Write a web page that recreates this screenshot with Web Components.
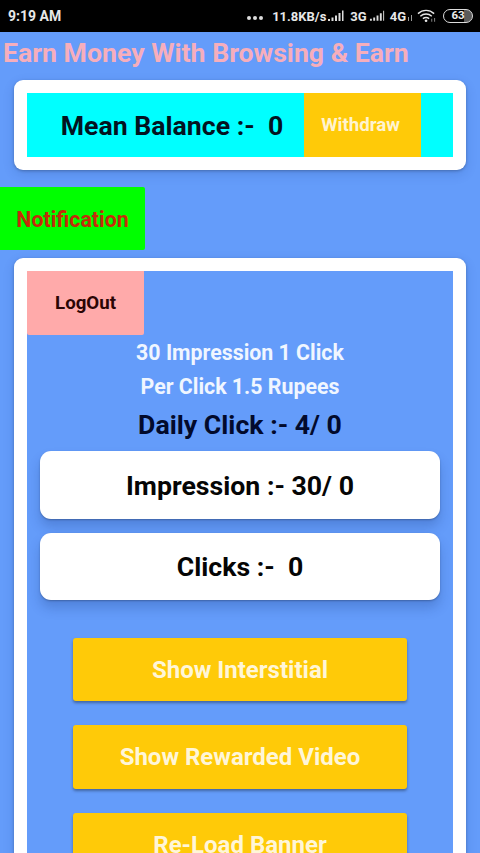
<!DOCTYPE html>
<html>
<head>
<meta charset="utf-8">
<title>Earn Money</title>
<style>
    html, body { margin: 0; height: 853px; overflow: hidden; background: #649cfa; }
    body { font-family: Roboto, "Liberation Sans", sans-serif; }
</style>
</head>
<body>
<app-screen>
    <status-bar></status-bar>
    <h-title>Earn Money With Browsing &amp; Earn</h-title>
    <white-card style="margin-top:11px">
        <balance-row></balance-row>
    </white-card>
    <flat-button kind="notify">Notification</flat-button>
    <white-card style="margin-top:8px">
        <click-panel></click-panel>
    </white-card>
</app-screen>

<script>
customElements.define('app-screen', class extends HTMLElement {
    constructor() {
        super();
        this.attachShadow({mode: 'open'}).innerHTML = `
<style>
    :host { display: flex; flex-direction: column; width: 480px; height: 853px; overflow: hidden; }
</style>
<slot></slot>`;
    }
});

customElements.define('status-bar', class extends HTMLElement {
    constructor() {
        super();
        this.attachShadow({mode: 'open'}).innerHTML = `
<style>
    :host { display: flex; flex: none; align-items: center; height: 32px; padding: 0 7px 0 8px; background: #000; color: #e8e8e8; font: 700 13px Roboto, sans-serif; }
    .time { flex: 1; font-size: 14px; }
    .right { display: flex; align-items: center; }
    .dots { display: flex; gap: 2px; margin-right: 9px; margin-top: 4px; }
    .dots i { width: 4px; height: 4px; border-radius: 50%; background: #ddd; }
    svg { display: block; flex: none; }
    .batt { box-sizing: border-box; width: 30px; height: 14px; margin-left: 6px; border: 1.5px solid #ddd; border-radius: 7px; background: linear-gradient(90deg, transparent 70%, #5a5a5a 70%); font-size: 11.5px; line-height: 11px; text-align: center; color: #eee; }
</style>
<span class="time">9:19 AM</span>
<span class="right">
    <span class="dots"><i></i><i></i><i></i></span>
    <span>11.8KB/s</span>
    <svg width="19" height="12" viewBox="0 0 17 12"><path fill="#ddd" d="M1 9h2v2H1zM4.500 7.500h2V11h-2zM8 5.500h2V11H8zM11.500 3h2v8h-2zM15 .5h1.500V11H15z"/></svg>
    <span style="margin-left:5px">3G</span>
    <svg width="17" height="12" viewBox="0 0 18 12" style="margin-left:2px"><path fill="#ddd" d="M1 9h2v2H1zM4.500 7.500h2V11h-2zM8 5.500h2V11H8zM11.500 3h2v8h-2zM15 .5h1V11h-1z"/></svg>
    <span style="margin-left:4px">4G</span>
    <svg width="6" height="8" viewBox="0 0 6 8" style="margin:4px 0 0 1px"><path fill="#999" d="M1 3h1v4H1zM4 1h1v6H4z"/></svg>
    <svg width="20" height="14" viewBox="0 0 21 14" style="margin-left:4px"><g fill="none" stroke="#e8e8e8" stroke-width="1.500"><path d="M1 4.500c5-4.500 12-4.500 17 0"/><path d="M3.500 7.200c3.500-3 8.500-3 12 0"/><path d="M6.200 9.800c2-1.600 4.600-1.600 6.600 0"/></g><circle cx="9.500" cy="12" r="1.400" fill="#e8e8e8"/><path fill="#888" d="M15 10h1v3h-1zM18 9h1v4h-1z"/></svg>
    <span class="batt">63</span>
</span>`;
    }
});

customElements.define('h-title', class extends HTMLElement {
    constructor() {
        super();
        this.attachShadow({mode: 'open'}).innerHTML = `
<style>
    :host { display: block; flex: none; height: 31px; margin-top: 6px; padding-left: 3px; color: #f6aebc; font: 700 26.670px/31px Roboto, sans-serif; white-space: nowrap; }
</style>
<slot></slot>`;
    }
});

customElements.define('white-card', class extends HTMLElement {
    constructor() {
        super();
        this.attachShadow({mode: 'open'}).innerHTML = `
<style>
    :host { display: block; flex: none; margin: 0 14px; padding: 13px; background: #fff; border-radius: 9px; box-shadow: 0 1px 3px rgba(0,0,0,.25), 0 4px 12px rgba(20,50,120,.16); }
</style>
<slot></slot>`;
    }
});

customElements.define('flat-button', class extends HTMLElement {
    constructor() {
        super();
        this.attachShadow({mode: 'open'}).innerHTML = `
<style>
    :host { display: flex; flex: none; align-items: center; justify-content: center; box-sizing: border-box; font-family: Roboto, sans-serif; font-weight: 700; }
    :host([kind=notify]) { width: 145px; height: 63px; margin-top: 17px; padding-top: 1px; background: #00ff00; color: #c62a0a; font-size: 21.330px; border-radius: 0 2px 2px 0; }
    :host([kind=withdraw]) { width: 117px; height: 64px; padding-right: 4px; background: #ffca08; color: #fff3d0; font-size: 18.670px; }
    :host([kind=logout]) { width: 117px; height: 64px; background: #ffaaaa; color: #2a0505; font-size: 18.670px; border-radius: 0 0 2px 2px; }
    :host([kind=action]) { width: 334px; height: 63.500px; margin: 0 auto 24px; padding-top: 1px; background: #ffca08; color: #fff6d8; font-size: 24px; border-radius: 3px; box-shadow: 0 2px 3px rgba(0,0,0,.35); }
</style>
<slot></slot>`;
    }
});

customElements.define('balance-row', class extends HTMLElement {
    constructor() {
        super();
        this.attachShadow({mode: 'open'}).innerHTML = `
<style>
    :host { display: flex; height: 64px; background: #00ffff; }
    .label { box-sizing: border-box; width: 277px; padding-left: 13px; text-align: center; color: #03131f; font: 700 26.670px/66px Roboto, sans-serif; white-space: pre; }
</style>
<span class="label">Mean Balance :-  0</span>
<flat-button kind="withdraw">Withdraw</flat-button>`;
    }
});

customElements.define('stat-box', class extends HTMLElement {
    constructor() {
        super();
        this.attachShadow({mode: 'open'}).innerHTML = `
<style>
    :host { display: flex; box-sizing: border-box; align-items: center; justify-content: center; height: 67.500px; margin: 0 13px 14px; padding-top: 2px; background: #fff; border-radius: 11px; box-shadow: 0 1px 2px rgba(0,0,0,.25), 0 8px 12px rgba(20,50,120,.24); color: #050505; font: 700 26.670px Roboto, sans-serif; white-space: pre; }
</style>
<slot></slot>`;
    }
});

customElements.define('click-panel', class extends HTMLElement {
    constructor() {
        super();
        this.attachShadow({mode: 'open'}).innerHTML = `
<style>
    :host { display: block; height: 600px; margin-bottom: -13px; background: #649cfa; font-family: Roboto, sans-serif; font-weight: 700; text-align: center; }
    .info { height: 34px; color: #f0f6ff; font-size: 21.330px; line-height: 34px; }
    .daily { height: 42px; margin-bottom: 5px; color: #020a2c; font-size: 26.670px; line-height: 42px; }
    .first { padding-top: 1px; }
    .gap { height: 23.500px; }
</style>
<flat-button kind="logout">LogOut</flat-button>
<div class="info first">30 Impression 1 Click</div>
<div class="info">Per Click 1.5 Rupees</div>
<div class="daily">Daily Click :- 4/ 0</div>
<stat-box>Impression :- 30/ 0</stat-box>
<stat-box>Clicks :-  0</stat-box>
<div class="gap"></div>
<flat-button kind="action">Show Interstitial</flat-button>
<flat-button kind="action">Show Rewarded Video</flat-button>
<flat-button kind="action">Re-Load Banner</flat-button>`;
    }
});
</script>
</body>
</html>
